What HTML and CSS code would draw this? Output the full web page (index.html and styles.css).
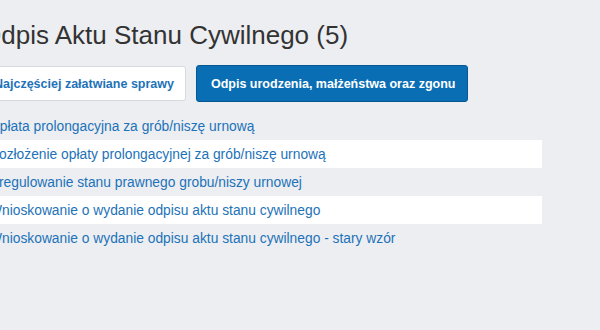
FILE: index.html
```html
<!DOCTYPE html>
<html lang="pl">
<head>
    <meta charset="UTF-8">
    <title>Odpis Aktu Stanu Cywilnego</title>
    <link rel="stylesheet" href="styles.css">
</head>
<body>
    <div class="page">
        <h1 class="title">Odpis Aktu Stanu Cywilnego (5)</h1>

        <!-- Tabs -->
        <div class="tabs">
            <button class="tab">Najczęściej załatwiane sprawy</button>
            <button class="tab active">Odpis urodzenia, małżeństwa oraz zgonu</button>
        </div>

        <!-- Matters list -->
        <ul class="matters">
            <li><a href="#">Opłata prolongacyjna za grób/niszę urnową</a></li>
            <li><a href="#">Rozłożenie opłaty prolongacyjnej za grób/niszę urnową</a></li>
            <li><a href="#">Uregulowanie stanu prawnego grobu/niszy urnowej</a></li>
            <li><a href="#">Wnioskowanie o wydanie odpisu aktu stanu cywilnego</a></li>
            <li><a href="#">Wnioskowanie o wydanie odpisu aktu stanu cywilnego - stary wzór</a></li>
        </ul>
    </div>
</body>
</html>
```

FILE: styles.css
```css
/* General */
body {
    margin: 0;
    background-color: #eceef2;
    font-family: "Liberation Sans", Arial, sans-serif;
    overflow: hidden;
}

.page {
    margin-left: -19px;
    width: 561px;
    padding-top: 20px;
}

/* Title */
.title {
    margin: 0;
    font-size: 26px;
    font-weight: normal;
    color: #333;
    line-height: 30px;
}

/* Tabs */
.tabs {
    display: flex;
    gap: 10px;
    margin-top: 15px;
    align-items: center;
}

.tab {
    font-family: inherit;
    font-size: 12.5px;
    font-weight: bold;
    height: 35px;
    padding: 0 11px 0 12px;
    border-radius: 3px;
    border: 1px solid #d6d9de;
    background-color: #fff;
    color: #1d72b8;
}

.tab.active {
    height: 37px;
    background-color: #0a6eb5;
    border-color: #075892;
    color: #fff;
    padding: 0 12px 0 14px;
}

/* List */
.matters {
    list-style: none;
    margin: 10px 0 0;
    padding: 0;
}

.matters li {
    height: 28px;
    display: flex;
    align-items: center;
    padding-left: 8px;
}

.matters li:nth-child(even) {
    background-color: #fff;
}

.matters a {
    font-size: 13.8px;
    color: #1d72b8;
    text-decoration: none;
}
```
